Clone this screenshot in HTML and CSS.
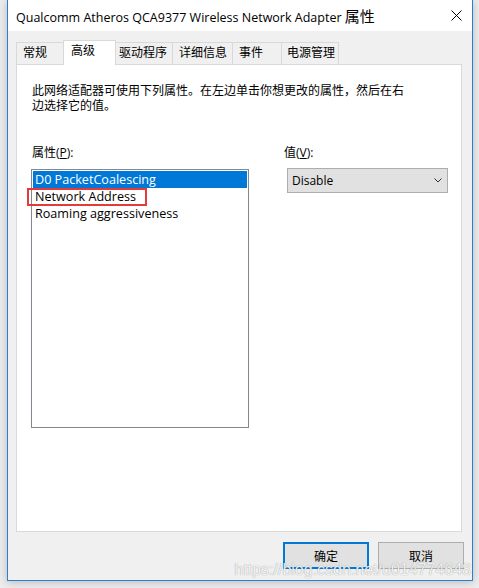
FILE: index.html
```html
<!DOCTYPE html>
<html lang="zh-CN">
<head>
<meta charset="utf-8">
<title>属性</title>
<link rel="stylesheet" href="styles.css">
</head>
<body>
<div class="window">
  <div class="titlebar">
    <span class="title">Qualcomm Atheros QCA9377 Wireless Network Adapter <span class="cjk-title">属性</span></span>
    <svg class="close" viewBox="0 0 11 11" width="11" height="11"><path d="M0.5 0.5 L10.5 10.5 M10.5 0.5 L0.5 10.5" stroke="#000" stroke-width="1" fill="none"/></svg>
  </div>
  <div class="client">
    <div class="tabs">
      <div class="tab">常规</div>
      <div class="tab active">高级</div>
      <div class="tab">驱动程序</div>
      <div class="tab">详细信息</div>
      <div class="tab">事件</div>
      <div class="tab">电源管理</div>
    </div>
    <div class="panel">
      <p class="desc">此网络适配器可使用下列属性。在左边单击你想更改的属性，然后在右边选择它的值。</p>
      <div class="fields">
        <div class="col-left">
          <div class="label">属性(<u>P</u>):</div>
          <div class="listbox">
            <div class="item selected">D0 PacketCoalescing</div>
            <div class="item">Network Address</div>
            <div class="item">Roaming aggressiveness</div>
            <div class="mark"></div>
          </div>
        </div>
        <div class="col-right">
          <div class="label">值(<u>V</u>):</div>
          <div class="combo">
            <span>Disable</span>
            <svg class="chev" viewBox="0 0 8 5" width="8" height="5"><path d="M0.5 0.5 L4 4 L7.5 0.5" stroke="#333" stroke-width="1" fill="none"/></svg>
          </div>
        </div>
      </div>
    </div>
    <div class="buttons">
      <button class="btn default">确定</button>
      <button class="btn">取消</button>
    </div>
  </div>
  <div class="watermark">https://blog.csdn.net/u014774648</div>
</div>
</body>
</html>
```
FILE: styles.css
```css
* { box-sizing: border-box; }
html, body { margin: 0; padding: 0; }
body {
  width: 479px;
  height: 588px;
  overflow: hidden;
  background: #ececec;
  font-family: "Open Sans", "Noto Sans CJK SC", sans-serif;
  font-size: 12px;
  color: #000;
}
.window {
  position: relative;
  margin-left: 7px;
  width: 466px;
  height: 581px;
  background: #f0f0f0;
  border: 1px solid #2a7fd2;
  border-top: 0;
  box-shadow: 0 1px 8px rgba(0, 0, 0, 0.22);
  display: flex;
  flex-direction: column;
}
.titlebar {
  height: 31px;
  flex: none;
  background: #fff;
  display: flex;
  align-items: center;
  padding: 0 10px 0 8px;
}
.title {
  flex: 1;
  font-size: 12.5px;
  white-space: nowrap;
}
.cjk-title { font-size: 15px; }
.close { display: block; }
.client {
  flex: 1;
  display: flex;
  flex-direction: column;
  padding: 9px 0 0 8px;
}
.tabs {
  display: flex;
  align-items: flex-end;
  height: 24px;
}
.tab {
  height: 22px;
  border: 1px solid #d9d9d9;
  border-bottom: 0;
  background: #f0f0f0;
  margin-left: -1px;
  padding-left: 6px;
  line-height: 20px;
  white-space: nowrap;
}
.tab:nth-child(1) { width: 48px; margin-left: 0; }
.tab:nth-child(2) { width: 53px; padding-left: 7px; }
.tab:nth-child(3) { width: 58px; padding-left: 3px; }
.tab:nth-child(4) { width: 61px; }
.tab:nth-child(5) { width: 50px; }
.tab:nth-child(6) { width: 58px; padding-left: 5px; }
.tab.active {
  position: relative;
  z-index: 1;
  height: 25px;
  margin-bottom: -1px;
  background: #fff;
  line-height: 20px;
}
.panel {
  width: 446px;
  height: 468px;
  background: #fff;
  border: 1px solid #d9d9d9;
  padding: 18px 0 0 15px;
}
.desc {
  margin: 0;
  width: 378px;
  line-height: 15px;
}
.fields {
  display: flex;
  margin-top: 32px;
  margin-left: -1px;
}
.label {
  height: 15px;
  line-height: 15px;
}
.col-left { width: 218px; }
.col-left .label { padding-left: 1px; }
.col-right { margin-left: 35px; }
.listbox {
  position: relative;
  margin-top: 9px;
  width: 218px;
  height: 259px;
  border: 1px solid #828790;
  padding: 1px;
  background: #fff;
}
.item {
  height: 17px;
  line-height: 17px;
  padding-left: 2px;
  font-size: 12.6px;
  white-space: nowrap;
}
.item.selected {
  background: #0078d7;
  color: #fff;
}
.mark {
  position: absolute;
  left: -5px;
  top: 18px;
  width: 120px;
  height: 18px;
  border: 2px solid #e53a3a;
}
.combo {
  margin: 8px 0 0 3px;
  width: 161px;
  height: 25px;
  border: 1px solid #adadad;
  background: #e1e1e1;
  display: flex;
  align-items: center;
  justify-content: space-between;
  padding: 0 5px 0 4px;
}
.buttons {
  display: flex;
  justify-content: flex-end;
  gap: 9px;
  margin-top: 10px;
  padding-right: 8px;
}
.btn {
  width: 86px;
  height: 27px;
  margin: 0;
  padding: 0;
  background: #e1e1e1;
  border: 1px solid #adadad;
  font: inherit;
  color: #000;
}
.btn.default { border: 2px solid #0078d7; }
.watermark {
  position: absolute;
  right: 1px;
  bottom: 1px;
  font-family: "Liberation Sans", sans-serif;
  font-size: 16px;
  line-height: 18px;
  color: rgba(255, 255, 255, 0.9);
  text-shadow: 0 0 1px rgba(0, 0, 0, 0.45);
  white-space: nowrap;
  pointer-events: none;
}
```
